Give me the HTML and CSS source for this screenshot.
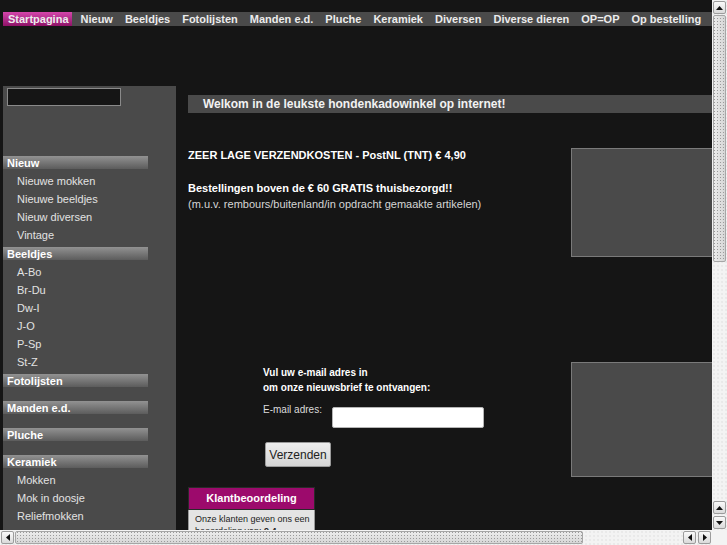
FILE: index.html
```html
<!DOCTYPE html>
<html lang="nl">
<head>
<meta charset="utf-8">
<title>Hondenkadowinkel</title>
<link rel="stylesheet" href="styles.css">
</head>
<body>
<div class="page">
  <nav class="topnav">
    <a class="active" href="#">Startpagina</a>
    <a href="#">Nieuw</a>
    <a href="#">Beeldjes</a>
    <a href="#">Fotolijsten</a>
    <a href="#">Manden e.d.</a>
    <a href="#">Pluche</a>
    <a href="#">Keramiek</a>
    <a href="#">Diversen</a>
    <a href="#">Diverse dieren</a>
    <a href="#">OP=OP</a>
    <a href="#">Op bestelling</a>
  </nav>

  <div class="layout">
    <aside class="sidebar">
      <input class="search" type="text" aria-label="Zoeken">
      <div class="cats">
        <div class="cat">
          <div class="cat-head">Nieuw</div>
          <ul class="cat-list">
            <li>Nieuwe mokken</li>
            <li>Nieuwe beeldjes</li>
            <li>Nieuw diversen</li>
            <li>Vintage</li>
          </ul>
        </div>
        <div class="cat">
          <div class="cat-head">Beeldjes</div>
          <ul class="cat-list">
            <li>A-Bo</li>
            <li>Br-Du</li>
            <li>Dw-I</li>
            <li>J-O</li>
            <li>P-Sp</li>
            <li>St-Z</li>
          </ul>
        </div>
        <div class="cat empty"><div class="cat-head">Fotolijsten</div></div>
        <div class="cat empty"><div class="cat-head">Manden e.d.</div></div>
        <div class="cat empty"><div class="cat-head">Pluche</div></div>
        <div class="cat">
          <div class="cat-head">Keramiek</div>
          <ul class="cat-list">
            <li>Mokken</li>
            <li>Mok in doosje</li>
            <li>Reliefmokken</li>
            <li>Tegels</li>
            <li>Onderzetters</li>
          </ul>
        </div>
        <div class="cat">
          <div class="cat-head">Diversen</div>
          <ul class="cat-list">
            <li>Sleutelhangers</li>
            <li>Magneten</li>
            <li>Kaarten</li>
            <li>Textiel</li>
            <li>Sieraden</li>
            <li>Overig</li>
          </ul>
        </div>
        <div class="cat">
          <div class="cat-head">Diverse dieren</div>
          <ul class="cat-list">
            <li>Katten</li>
            <li>Paarden</li>
            <li>Overige dieren</li>
          </ul>
        </div>
        <div class="cat empty"><div class="cat-head">OP=OP</div></div>
        <div class="cat empty"><div class="cat-head">Op bestelling</div></div>
      </div>
    </aside>

    <main class="main">
      <div class="welcome">Welkom in de leukste hondenkadowinkel op internet!</div>
      <div class="cols">
        <div class="center">
          <p class="ship">ZEER LAGE VERZENDKOSTEN - PostNL (TNT) € 4,90</p>
          <p class="free"><strong>Bestellingen boven de € 60 GRATIS thuisbezorgd!!</strong><br>(m.u.v. rembours/buitenland/in opdracht gemaakte artikelen)</p>

          <form class="news">
            <p class="news-title">Vul uw e-mail adres in<br>om onze nieuwsbrief te ontvangen:</p>
            <div class="news-row">
              <label class="news-label" for="mail">E-mail adres:</label>
              <input class="news-input" id="mail" type="text">
            </div>
            <button class="news-btn" type="button">Verzenden</button>
          </form>

          <div class="review">
            <div class="review-head">Klantbeoordeling</div>
            <div class="review-body">Onze klanten geven ons een beoordeling van: <strong>9,4</strong><br>Gebaseerd op 312 beoordelingen</div>
          </div>
        </div>
        <div class="right">
          <div class="pic pic1"></div>
          <div class="pic pic2"></div>
        </div>
      </div>
    </main>
  </div>
</div>

<div class="vscroll" aria-hidden="true">
  <div class="sb-btn"><svg viewBox="0 0 7 4" width="7" height="4"><polygon points="0,4 3.5,0 7,4" fill="#111"/></svg></div>
  <div class="vtrack"><div class="vthumb"></div></div>
  <div class="sb-btn"><svg viewBox="0 0 7 4" width="7" height="4"><polygon points="0,4 3.5,0 7,4" fill="#111"/></svg></div>
  <div class="sb-btn"><svg viewBox="0 0 7 4" width="7" height="4"><polygon points="0,0 7,0 3.5,4" fill="#111"/></svg></div>
</div>
<div class="hscroll" aria-hidden="true">
  <div class="sb-btn"><svg viewBox="0 0 4 7" width="4" height="7"><polygon points="4,0 4,7 0,3.5" fill="#111"/></svg></div>
  <div class="htrack"><div class="hthumb"></div></div>
  <div class="sb-btn"><svg viewBox="0 0 4 7" width="4" height="7"><polygon points="4,0 4,7 0,3.5" fill="#111"/></svg></div>
  <div class="sb-btn"><svg viewBox="0 0 4 7" width="4" height="7"><polygon points="0,0 0,7 4,3.5" fill="#111"/></svg></div>
</div>
<div class="sb-corner" aria-hidden="true"></div>
</body>
</html>
```

FILE: styles.css
```css
html, body {
  margin: 0;
  padding: 0;
  background: #151515;
}
body {
  font-family: "Liberation Sans", Arial, sans-serif;
  color: #e6e6e6;
}
.page {
  width: 837px;
  padding: 12px 0 0 3px;
}

/* top navigation */
.topnav {
  display: flex;
  gap: 4px;
  height: 14px;
  background: #4a4a4a;
}
.topnav a {
  display: block;
  padding: 0 3px 0 5px;
  font-size: 11px;
  font-weight: bold;
  line-height: 14px;
  color: #ececec;
  text-decoration: none;
  white-space: nowrap;
}
.topnav a.active {
  background: linear-gradient(#d446ab, #8e1267);
}

/* layout */
.layout {
  display: flex;
  gap: 12px;
  margin-top: 60px;
}

/* sidebar */
.sidebar {
  width: 173px;
  flex: none;
  background: #4a4a4a;
  padding: 2px 0 30px;
}
.search {
  display: block;
  box-sizing: border-box;
  width: 114px;
  height: 18px;
  margin: 0 0 0 4px;
  background: #151515;
  border: 1px solid #8a8a8a;
  padding: 0;
}
.cats {
  margin-top: 50px;
}
.cat {
  margin-bottom: 3px;
}
.cat.empty {
  margin-bottom: 14px;
}
.cat-head {
  width: 141px;
  height: 13px;
  padding-left: 4px;
  background: linear-gradient(#929292, #5c5c5c);
  color: #fff;
  font-size: 11px;
  font-weight: bold;
  line-height: 14px;
  margin-bottom: 3px;
}
.cat.empty .cat-head {
  margin-bottom: 0;
}
.cat-list {
  list-style: none;
  margin: 0;
  padding: 0 0 0 14px;
}
.cat-list li {
  height: 18px;
  line-height: 18px;
  font-size: 11px;
  color: #e2e2e2;
}

/* main */
.main {
  flex: 1;
  padding-top: 9px;
}
.welcome {
  height: 18px;
  background: #4a4a4a;
  padding-left: 15px;
  font-size: 12px;
  font-weight: bold;
  line-height: 18px;
  color: #f2f2f2;
}
.cols {
  display: flex;
  gap: 10px;
}
.center {
  width: 373px;
  flex: none;
}
.ship {
  margin: 35px 0 0;
  font-size: 11px;
  font-weight: bold;
  line-height: 14px;
  color: #fff;
}
.free {
  margin: 18px 0 0;
  font-size: 11px;
  line-height: 16px;
  color: #d6d6d6;
}
.free strong {
  color: #fff;
}

/* newsletter */
.news {
  margin: 153px 0 0 75px;
}
.news-title {
  margin: 0;
  font-size: 10px;
  font-weight: bold;
  line-height: 15px;
  color: #fff;
}
.news-row {
  display: flex;
  align-items: flex-start;
  margin-top: 8px;
}
.news-label {
  flex: none;
  width: 69px;
  font-size: 10px;
  line-height: 14px;
  color: #dcdcdc;
  white-space: nowrap;
}
.news-input {
  box-sizing: border-box;
  width: 152px;
  height: 21px;
  margin: 4px 0 0;
  background: #fff;
  border: 1px solid #b5b5b5;
  border-radius: 2px;
}
.news-btn {
  display: block;
  box-sizing: border-box;
  margin: 14px 0 0 2px;
  width: 66px;
  height: 25px;
  padding: 0;
  font-family: "Liberation Sans", Arial, sans-serif;
  font-size: 12px;
  color: #222;
  background: linear-gradient(#eeeeee, #d4d4d4);
  border: 1px solid #9a9a9a;
  border-radius: 2px;
}

/* review widget */
.review {
  margin-top: 20px;
  width: 127px;
}
.review-head {
  height: 23px;
  box-sizing: border-box;
  border: 1px solid #2a2a2a;
  background: #9c0a6c;
  color: #fff;
  font-size: 11px;
  font-weight: bold;
  line-height: 21px;
  text-align: center;
}
.review-body {
  background: #e4e4e4;
  border: 1px solid #999;
  border-top: none;
  padding: 3px 3px 8px 6px;
  font-size: 9px;
  line-height: 12px;
  color: #222;
  height: 380px;
}

/* right column */
.right {
  width: 160px;
  flex: none;
}
.pic {
  box-sizing: border-box;
  background: #4a4a4a;
  border: 1px solid #7a7a7a;
}
.pic1 {
  margin-top: 35px;
  height: 109px;
}
.pic2 {
  margin-top: 105px;
  height: 115px;
}

/* window scrollbars (drawn over the page) */
.vscroll,
.hscroll {
  position: fixed;
  display: flex;
  background-color: #f3f3f3;
  background-image: radial-gradient(circle, #dcdcdc 0.6px, transparent 0.8px);
  background-size: 4px 4px;
}
.vscroll {
  top: 0;
  right: 0;
  width: 15px;
  height: 530px;
  flex-direction: column;
}
.hscroll {
  left: 0;
  bottom: 0;
  width: 712px;
  height: 15px;
  flex-direction: row;
}
.sb-corner {
  position: fixed;
  right: 0;
  bottom: 0;
  width: 15px;
  height: 15px;
  background: #f3f3f3;
}
.sb-btn {
  flex: none;
  box-sizing: border-box;
  width: 13px;
  height: 13px;
  margin: 1px;
  display: flex;
  align-items: center;
  justify-content: center;
  border: 1px solid #9c9c9c;
  border-radius: 2px;
  background: linear-gradient(#fafafa, #dadada);
}
.vscroll .sb-btn:first-child {
  margin-top: 1px;
}
.vtrack,
.htrack {
  flex: 1;
  display: flex;
}
.vtrack {
  flex-direction: column;
  padding: 0 1px;
}
.htrack {
  padding: 1px 0;
}
.vthumb,
.hthumb {
  box-sizing: border-box;
  border: 1px solid #a6a6a6;
  border-radius: 2px;
  background-color: #dedede;
}
.vthumb {
  width: 13px;
  height: 247px;
  background-image:
    radial-gradient(circle, #9a9a9a 0.7px, transparent 1px),
    linear-gradient(90deg, #ececec, #d6d6d6);
  background-size: 3px 3px, 100% 100%;
  background-repeat: repeat, no-repeat;
  background-position: 2px 115px, 0 0;
  background-clip: content-box, border-box;
}
.hthumb {
  width: 568px;
  height: 13px;
  background-image:
    radial-gradient(circle, #9a9a9a 0.7px, transparent 1px),
    linear-gradient(#ececec, #d6d6d6);
  background-size: 3px 3px, 100% 100%;
  background-repeat: repeat, no-repeat;
  background-position: 276px 2px, 0 0;
}
```
